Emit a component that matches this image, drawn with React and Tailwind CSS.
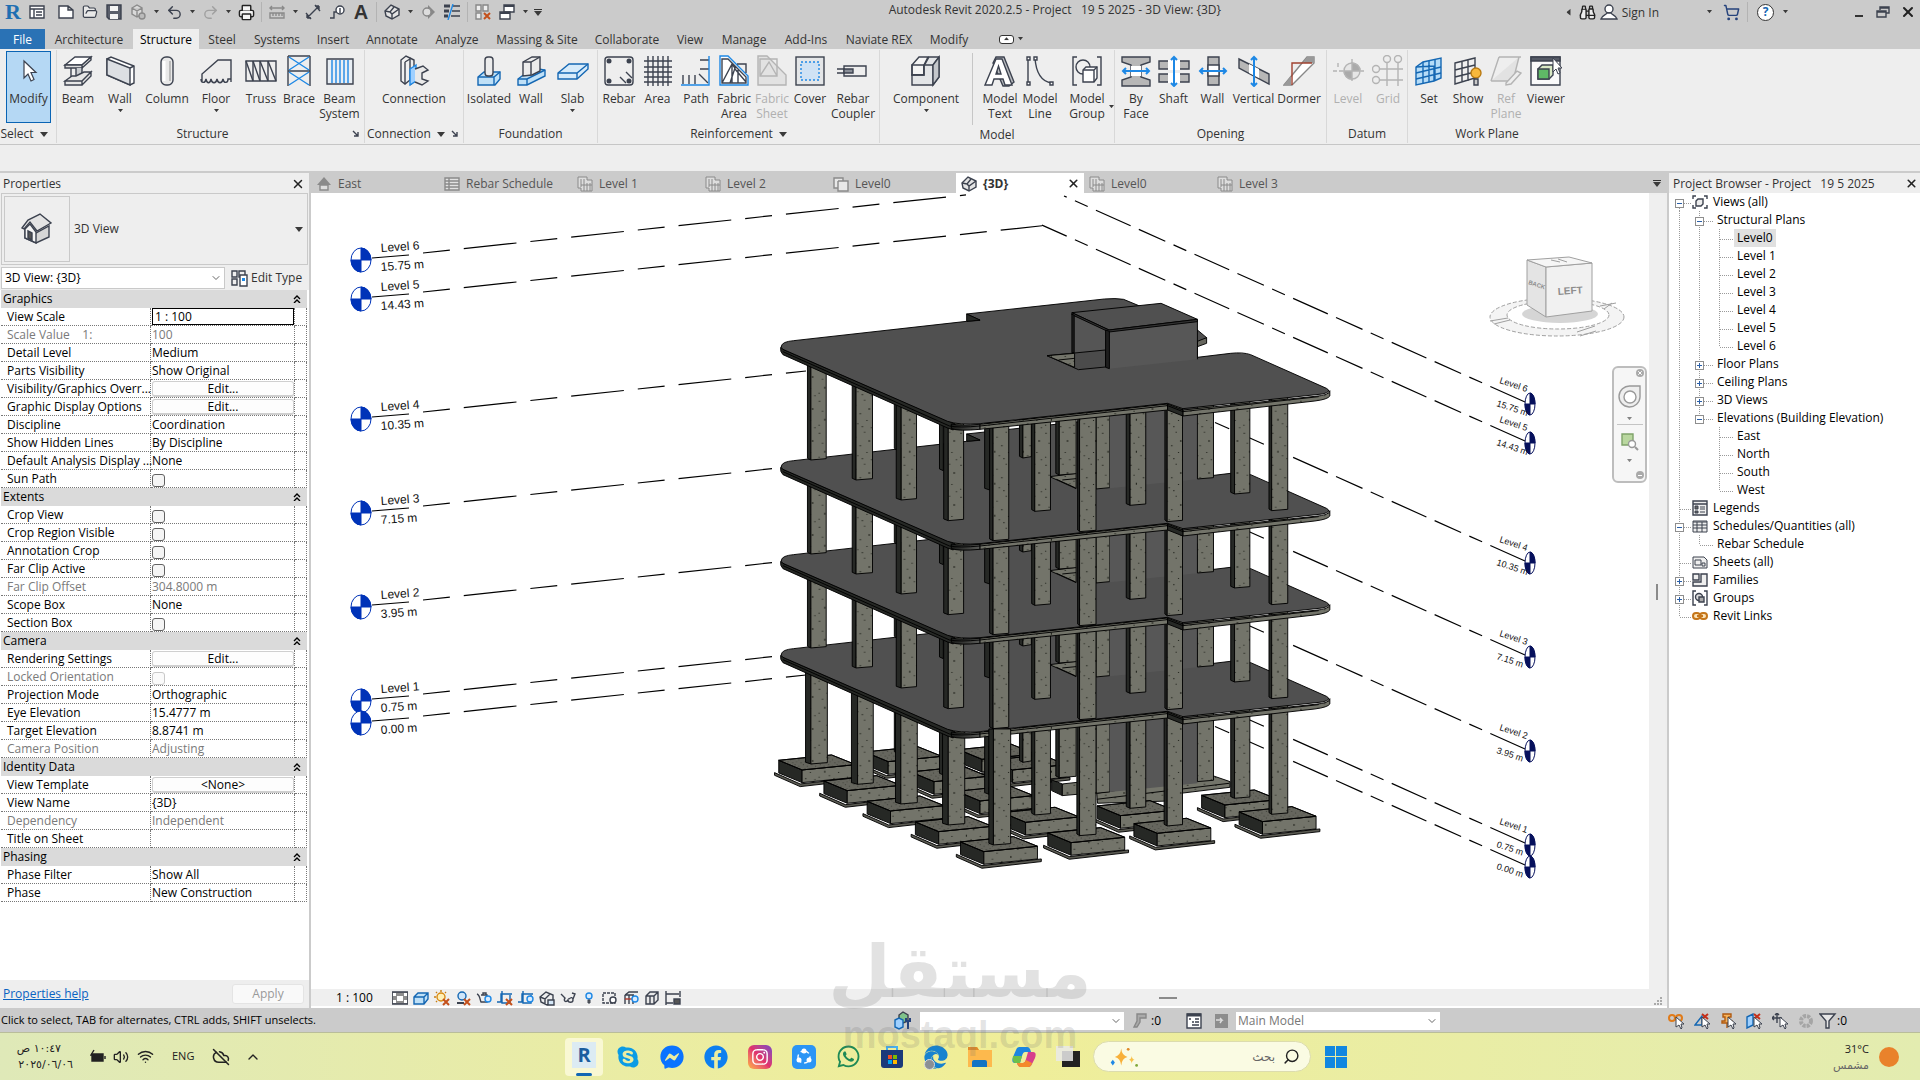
import {
  Binoculars,
  ChevronDown,
  ChevronUp,
  CloudOff,
  FolderOpen,
  Printer,
  Redo2,
  Save,
  Search,
  ShoppingCart,
  Undo2,
  Volume2,
  Wifi,
  X,
} from "lucide-react";
import {
  FaEdge,
  FaFacebook,
  FaFacebookMessenger,
  FaInstagram,
  FaSkype,
  FaWhatsapp,
} from "react-icons/fa";

const INK = "#3c424f";
const BLUE = "#1e88e5";
const MUTED = "#b4b4b4";

// ================= SMALL SHARED PIECES =================

function Caret({ className = "w-[6px]" }) {
  return (
    <svg viewBox="0 0 8 5" className={className}>
      <path d="M0 0h8L4 5z" fill="#3a3a3a" />
    </svg>
  );
}

function Art({ size = 32, className = "", children }) {
  return (
    <svg
      viewBox={`0 0 ${size} ${size}`}
      width={size}
      height={size}
      fill="none"
      stroke={INK}
      strokeWidth="1.4"
      className={`shrink-0 ${className}`}
    >
      {children}
    </svg>
  );
}

function Picker({ label, options, className = "", selectClass = "" }) {
  return (
    <span className={`relative flex shrink-0 items-center bg-white ${className}`}>
      <select aria-label={label} className={`h-full w-full appearance-none bg-transparent ${selectClass}`}>
        {options.map((option) => (
          <option key={option}>{option}</option>
        ))}
      </select>
      <ChevronDown size={12} color="#666" className="pointer-events-none absolute right-[2px]" />
    </span>
  );
}

// ================= RIBBON ICONS =================

const ribbonArt = {
  cursor: (
    <path d="M11 6v17l4-4 3 7 3-1.500-3-7h5z" fill="#fff" strokeWidth="1.200" />
  ),
  beam: (
    <>
      <path d="M3 10l10-8h16l-9 8z" fill="#fff" />
      <path d="M3 10h17v3H3zM20 10l9-8v3l-9 8" fill="#ddd" />
      <path d="M9 13v10M14 13v9l6-4V13" fill="#c9ccd0" />
      <path d="M3 26l7-5h4l8-4h7l-9 9zM3 26h17v4H3zM20 26l9-9v4l-9 9" fill="#e6e6e6" />
    </>
  ),
  wall: (
    <>
      <path d="M3 4l4-2 23 9v17l-4 2L3 20z" fill="#fff" />
      <path d="M3 4l23 9v17L3 20z" fill="#dcdfe3" />
      <path d="M26 13l4-2" />
    </>
  ),
  column: (
    <>
      <rect x="10" y="2" width="12" height="28" rx="5" fill="#e9e9e9" />
      <path d="M13 6v20" stroke="#fff" strokeWidth="3" />
      <path d="M19 6v20" stroke="#bbb" strokeWidth="2" />
    </>
  ),
  floor: (
    <>
      <path d="M2 20L18 5h13v22H2z" fill="#ececec" stroke="none" />
      <path d="M31 27V5H18L2 19v8M1 24c0 4 4 5 5 0 1 5 4 5 5 0 1 5 5 5 6 0 1 5 5 5 6 0 1 5 5 4 5 0l3 0" />
    </>
  ),
  truss: (
    <>
      <path d="M1 6h30v20H1zM1 6v20M8 6v20M15 6v20M23 6v20" />
      <path d="M1 6l7 20M8 6l7 20M15 6l8 20M23 6l8 20" />
    </>
  ),
  brace: (
    <>
      <path d="M5 1h22M5 16h22M5 31V1M27 31V1" />
      <path d="M6 2l20 13M26 2L6 15M6 17l20 13M26 17L6 30" stroke={BLUE} />
    </>
  ),
  beamSystem: (
    <>
      <path d="M3 4h26v25H3z" fill="#e8eef4" />
      <path d="M8 5v23M12 5v23M16 5v23M20 5v23M24 5v23" stroke={BLUE} />
    </>
  ),
  connection: (
    <>
      <path d="M3 5l5-4 4 2v22l-5 4-4-3z" fill="#f0f0f0" />
      <path d="M7 7l5-3M7 7v22M12 3l4 2v22l-4 3" />
      <path d="M12 14l6-4v16l-6 4z" fill="#9fd0ff" stroke={BLUE} />
      <path d="M17 14l8-3 5 4-6 3v6l6 2-6 4-7-3" fill="#e9e9e9" />
    </>
  ),
  isolated: (
    <>
      <path d="M5 22l6-5h16v7l-5 6H5z" fill="#bfe0f7" stroke="#1467b3" />
      <path d="M5 22h16l6-5M21 22v8" stroke="#1467b3" />
      <rect x="12" y="2" width="8" height="19" rx="3" fill="#ececec" />
    </>
  ),
  wallFooting: (
    <>
      <path d="M3 24l8-6 4 2 9-6 6 1v6L12 30H3z" fill="#bfe0f7" stroke="#1467b3" />
      <path d="M3 24h9l18-9M12 24v6" stroke="#1467b3" />
      <path d="M8 7l9-5h8v14l-8 4-9 1z" fill="#ececec" />
      <path d="M8 7l8 0 9-5M16 7v13" />
    </>
  ),
  slab: (
    <>
      <path d="M1 18L12 9h19v5L20 24H1z" fill="#d7ebfa" stroke="#1467b3" />
      <path d="M1 18h19l11-9M20 18v6" stroke="#1467b3" />
    </>
  ),
  rebar: (
    <>
      <rect x="2" y="2" width="28" height="28" rx="3" />
      <g fill={INK} stroke="none">
        <circle cx="6" cy="6" r="2.500" />
        <circle cx="26" cy="6" r="2.500" />
        <circle cx="6" cy="26" r="2.500" />
        <circle cx="26" cy="26" r="2.500" />
      </g>
      <path d="M17 22l6 6M23 17l6 6" />
    </>
  ),
  area: (
    <path d="M2 6h28M2 12h28M2 17h28M2 22h28M2 27h28M6 1v30M11 1v30M16 1v30M21 1v30M26 1v30" />
  ),
  path: (
    <>
      <path d="M20 5h9M20 14h9M3 20v9M9 20v9M15 20v9M19 19l9 9" />
      <path d="M29 1v29H1" stroke={BLUE} />
    </>
  ),
  fabricArea: (
    <>
      <path d="M2 1h8l20 20v9H2z" fill="#fff" stroke={BLUE} />
      <path d="M4 4v24h24v-6L10 4zM4 28L14 9l3 4-5 15M17 14l11 13M14 10V28M20 15v13" />
      <path d="M19 9h9v9" />
    </>
  ),
  fabricSheet: (
    <g stroke={MUTED}>
      <path d="M2 1h9l19 19v10H2z" fill="#e2e2e2" />
      <path d="M4 4h17v17H4zM4 21l9-14 8 14" />
    </g>
  ),
  cover: (
    <>
      <rect x="2" y="2" width="28" height="28" fill="#e4e6e8" />
      <rect x="7" y="7" width="18" height="18" fill="#cfe2f4" stroke={BLUE} strokeDasharray="2 2" />
    </>
  ),
  coupler: (
    <>
      <path d="M0 14h8M0 18h8M7 11h22v10H7z" />
      <path d="M7 14h9v4H7z" fill="#8a8f98" />
    </>
  ),
  component: (
    <>
      <path d="M2 10l7-8h9l-4 8v10H2z" fill="#f4f4f4" />
      <path d="M2 20h12v-9l5-9h10v20l-6 8H2z" fill="#e3e5e7" />
      <path d="M14 10h9v20M23 10l6-8M2 10h12v10H2z" fill="none" />
      <path d="M23 10l6-8v20l-6 8z" fill="#c4c7cb" />
    </>
  ),
  modelText: (
    <>
      <path d="M9 8l3-6h8l10 25-5 4h-6z" fill="#b9bcc0" />
      <path d="M1 30L12 4h6l10 26h-7l-2-6H10l-2 6zM12 19h5l-2.500-8z" fill="#fff" />
    </>
  ),
  modelLine: (
    <>
      <path d="M4 3v25M11 3c1 15 6 23 16 25" />
      <path d="M3 2h3v3H3zM3 27h3v3H3zM10 2h3v3h-3zM26 27h3v3h-3z" fill="#fff" />
    </>
  ),
  modelGroup: (
    <>
      <path d="M6 2H2v28h4M26 2h4v28h-4" />
      <circle cx="12" cy="12" r="7" fill="#f0f0f0" />
      <path d="M12 15l3-3h11v11l-3 4H12z" fill="#fff" />
      <path d="M12 15h11v12M23 15l3-3" />
    </>
  ),
  byFace: (
    <>
      <path d="M2 2h28v5l-9 3v12l9 3v6H2v-6l9-3V10L2 7z" fill="#b7b7b7" />
      <path d="M11 11h10v10H11z" fill="#fff" stroke="none" />
      <path d="M3 16h26M6 13l-3 3 3 3M26 13l3 3-3 3" stroke={BLUE} strokeWidth="2" />
    </>
  ),
  shaft: (
    <>
      <path d="M1 6h30v8H1zM1 19h30v8H1z" fill="#b7b7b7" />
      <path d="M10 5h12v10H10zM10 18h12v10H10z" fill="#fff" stroke="none" />
      <path d="M16 2v29M13 5l3-3 3 3M13 28l3 3 3-3" stroke={BLUE} strokeWidth="2" />
    </>
  ),
  wallOpening: (
    <>
      <path d="M11 2h11v28H11z" fill="#b7b7b7" />
      <path d="M11 10h11v11H11z" fill="#fff" />
      <path d="M3 16h26M6 13l-3 3 3 3M26 13l3 3-3 3" stroke={BLUE} strokeWidth="2" />
    </>
  ),
  vertical: (
    <>
      <path d="M1 4l30 15v10L1 13z" fill="#b7b7b7" />
      <path d="M11 9l10 5v9l-10-5z" fill="#fff" stroke="none" />
      <path d="M16 2v29M13 5l3-3 3 3M13 28l3 3 3-3" stroke={BLUE} strokeWidth="2" />
    </>
  ),
  dormer: (
    <>
      <path d="M1 30L24 2h7v6L9 30z" fill="#fff" stroke="#888" />
      <path d="M1 30l7-9v9zM24 2h7v6h-11z" fill="#999" stroke="none" />
      <path d="M9 30V8h20" stroke="#a0412f" />
    </>
  ),
  level: (
    <g stroke={MUTED}>
      <path d="M1 16h10M6 8v5M29 16h3M20 4v24" strokeDasharray="4 2" />
      <circle cx="20" cy="16" r="8" fill="#e6e6e6" />
      <path d="M20 8a8 8 0 0 1 8 8h-8zM20 24a8 8 0 0 1-8-8h8z" fill="#aaa" />
    </g>
  ),
  grid: (
    <g stroke={MUTED}>
      <path d="M7 14h24M7 25h24M15 8v23M26 8v23" />
      <circle cx="15" cy="4" r="3.500" />
      <circle cx="26" cy="4" r="3.500" />
      <circle cx="4" cy="14" r="3.500" />
      <circle cx="4" cy="25" r="3.500" />
    </g>
  ),
  set: (
    <>
      <path d="M3 12l7-5 18-4v20l-7 3-18 4z" fill="#b5dcf8" stroke="#1467b3" />
      <path d="M10 7v22M16 6v21M22 4v22M3 18l25-6M3 24l25-6M3 12l18-1v15" stroke="#1467b3" />
    </>
  ),
  show: (
    <>
      <path d="M3 8l20-5v20L3 29zM3 15l20-5M3 22l20-5M10 6v21M16 5v21" fill="#f0f0f0" />
      <circle cx="24" cy="18" r="5" fill="#f8b83c" stroke="#b97a12" />
      <path d="M22 24h4v6h-4z" fill="#c9c9c9" />
    </>
  ),
  refPlane: (
    <g stroke={MUTED}>
      <path d="M1 26h22l6-24M9 2h22M1 26L9 2" fill="#e2e2e2" />
      <path d="M16 28l11-12 4 2-10 11-5 1z" fill="#eee" />
    </g>
  ),
  viewer: (
    <>
      <path d="M1 2h29v28H1z" fill="#fafafa" />
      <path d="M1 2h29v4H1z" fill="#555a66" />
      <path d="M8 14l4-4h11v10l-4 4H8z" fill="#d8e8c4" />
      <path d="M8 14h11v10H8z" fill="#5fb866" />
      <path d="M23 3v14l3-3 2 5 2-1-2-5h4z" fill="#fff" strokeWidth="1" />
    </>
  ),
};

const ribbonPanels = [
  {
    title: "Structure",
    launcher: true,
    tools: [
      { id: "beam", art: "beam", lines: ["Beam"], w: "w-[42px]" },
      { id: "wall", art: "wall", lines: ["Wall"], w: "w-[42px]", drop: true },
      { id: "column", art: "column", lines: ["Column"], w: "w-[52px]" },
      { id: "floor", art: "floor", lines: ["Floor"], w: "w-[46px]", drop: true },
      { id: "truss", art: "truss", lines: ["Truss"], w: "w-[44px]" },
      { id: "brace", art: "brace", lines: ["Brace"], w: "w-[32px]" },
      { id: "bsys", art: "beamSystem", lines: ["Beam", "System"], w: "w-[49px]" },
    ],
  },
  {
    title: "Connection",
    menu: true,
    launcher: true,
    tools: [{ id: "conn", art: "connection", lines: ["Connection"], w: "w-[98px]" }],
  },
  {
    title: "Foundation",
    tools: [
      { id: "iso", art: "isolated", lines: ["Isolated"], w: "w-[50px]" },
      { id: "fwall", art: "wallFooting", lines: ["Wall"], w: "w-[34px]" },
      { id: "slab", art: "slab", lines: ["Slab"], w: "w-[49px]", drop: true },
    ],
  },
  {
    title: "Reinforcement",
    menu: true,
    tools: [
      { id: "rebar", art: "rebar", lines: ["Rebar"], w: "w-[42px]" },
      { id: "area", art: "area", lines: ["Area"], w: "w-[35px]" },
      { id: "path", art: "path", lines: ["Path"], w: "w-[42px]" },
      { id: "farea", art: "fabricArea", lines: ["Fabric", "Area"], w: "w-[34px]" },
      { id: "fsheet", art: "fabricSheet", lines: ["Fabric", "Sheet"], w: "w-[42px]", off: true },
      { id: "cover", art: "cover", lines: ["Cover"], w: "w-[34px]" },
      { id: "coupler", art: "coupler", lines: ["Rebar", "Coupler"], w: "w-[52px]" },
    ],
  },
  {
    title: "Model",
    tools: [
      { id: "comp", art: "component", lines: ["Component"], w: "w-[92px]", drop: true, split: true },
      { id: "mtext", art: "modelText", lines: ["Model", "Text"], w: "w-[40px]" },
      { id: "mline", art: "modelLine", lines: ["Model", "Line"], w: "w-[40px]" },
      { id: "mgroup", art: "modelGroup", lines: ["Model", "Group"], w: "w-[54px]", side: true },
    ],
  },
  {
    title: "Opening",
    tools: [
      { id: "face", art: "byFace", lines: ["By", "Face"], w: "w-[42px]" },
      { id: "shaft", art: "shaft", lines: ["Shaft"], w: "w-[33px]" },
      { id: "owall", art: "wallOpening", lines: ["Wall"], w: "w-[45px]" },
      { id: "vert", art: "vertical", lines: ["Vertical"], w: "w-[37px]" },
      { id: "dormer", art: "dormer", lines: ["Dormer"], w: "w-[54px]" },
    ],
  },
  {
    title: "Datum",
    tools: [
      { id: "lvl", art: "level", lines: ["Level"], w: "w-[42px]", off: true },
      { id: "grd", art: "grid", lines: ["Grid"], w: "w-[38px]", off: true },
    ],
  },
  {
    title: "Work Plane",
    open: true,
    tools: [
      { id: "set", art: "set", lines: ["Set"], w: "w-[42px]" },
      { id: "show", art: "show", lines: ["Show"], w: "w-[36px]" },
      { id: "ref", art: "refPlane", lines: ["Ref", "Plane"], w: "w-[40px]", off: true },
      { id: "viewer", art: "viewer", lines: ["Viewer"], w: "w-[40px]" },
    ],
  },
];

// ================= TITLE BAR =================

function QuickButton({ label, children }) {
  return (
    <button aria-label={label} className="flex h-6 w-6 items-center justify-center">
      {children}
    </button>
  );
}

function QuickCaret() {
  return (
    <button aria-label="More" className="flex h-6 w-3 items-center justify-center">
      <Caret className="w-[5px]" />
    </button>
  );
}

function QuickDivider() {
  return <div className="mx-[3px] h-5 w-px bg-[#b3b3b3]" />;
}

function HouseMark() {
  return (
    <Art size={16}>
      <path d="M1 7l6-6 8 4v6l-7 4-6-3z" fill="#e4e4e4" />
      <path d="M1 7l5 1 4-5M6 8l2 2 7-5M8 9v6" />
    </Art>
  );
}

function TitleBar() {
  return (
    <header className="flex h-[29px] shrink-0 items-start bg-[#cbcbcb]">
      <div className="flex items-center pl-px">
        <span className="w-6 text-center font-['Liberation_Serif',serif] text-[22px] leading-6 font-bold text-[#1f6fb2]">
          R
        </span>
        <QuickButton label="Properties">
          <Art size={16}>
            <path d="M1 2h14v12H1zM1 5h14M5 5v9M7 8h6M7 11h6" fill="#fff" />
          </Art>
        </QuickButton>
        <div className="w-[5px]" />
        <QuickButton label="New">
          <Art size={16}>
            <path d="M1 2h9l5 4v8H1zM10 2v4h5" fill="#fff" />
          </Art>
        </QuickButton>
        <QuickButton label="Open">
          <FolderOpen size={16} color={INK} fill="#e8e8e8" strokeWidth={1.8} />
        </QuickButton>
        <QuickButton label="Save">
          <Art size={16}>
            <path d="M1 1h14v14H3l-2-2z" fill="#5a5f6b" />
            <path d="M4 2h8v5H4zM4 10h8v5H4z" fill="#f4f4f4" stroke="none" />
          </Art>
        </QuickButton>
        <QuickButton label="Synchronize">
          <Art size={16}>
            <g stroke="#8a8a8a">
              <path d="M2 4l5-3 5 3v6l-5 3-5-3zM2 4l5 3 5-3M7 7v6" fill="#d9d9d9" />
              <circle cx="12" cy="12" r="3" fill="#bbb" />
            </g>
          </Art>
        </QuickButton>
        <QuickCaret />
        <QuickButton label="Undo">
          <Undo2 size={17} color={INK} />
        </QuickButton>
        <QuickCaret />
        <QuickButton label="Redo">
          <Redo2 size={17} color="#a0a0a0" />
        </QuickButton>
        <QuickCaret />
        <QuickButton label="Print">
          <Printer size={17} color="#222" fill="#f4f4f4" />
        </QuickButton>
        <QuickDivider />
        <QuickButton label="Measure">
          <Art size={16}>
            <path d="M1 4h14M3 2L1 4l2 2M13 2l2 2-2 2M1 9h14v5H1zM4 9v3M7 9v3M10 9v3M13 9v3" stroke="#8a8a8a" />
          </Art>
        </QuickButton>
        <QuickCaret />
        <QuickButton label="Aligned Dimension">
          <Art size={16}>
            <path d="M2 14L14 2M1 9l5 6M10 1l5 6M2 14h4M2 14v-4M14 2h-4M14 2v4" />
          </Art>
        </QuickButton>
        <QuickButton label="Tag by Category">
          <Art size={16}>
            <path d="M1 14h4V8h3" />
            <circle cx="11" cy="6" r="4" fill="#fff" />
            <path d="M11 4v5" />
          </Art>
        </QuickButton>
        <QuickButton label="Text">
          <span className="font-['Liberation_Sans',sans-serif] text-xl leading-6 font-bold text-[#333]">
            A
          </span>
        </QuickButton>
        <QuickDivider />
        <QuickButton label="Default 3D View">
          <HouseMark />
        </QuickButton>
        <QuickCaret />
        <QuickButton label="Section">
          <Art size={16}>
            <path d="M8 1l7 7-7 7z" fill="#888" stroke="none" />
            <circle cx="7" cy="8" r="4" fill="#ddd" stroke="#888" />
          </Art>
        </QuickButton>
        <QuickButton label="Thin Lines">
          <Art size={16}>
            <path d="M0 2h6M0 7h5M0 12h4" strokeWidth="3" />
            <path d="M9 2h7M8 7h8M7 12h9" />
            <path d="M9 0L4 16" stroke={BLUE} />
          </Art>
        </QuickButton>
        <QuickDivider />
        <QuickButton label="Close Inactive Views">
          <Art size={16}>
            <path d="M1 1h5v6H1zM8 1h5v6H8zM1 9h5v6H1z" fill="#eee" stroke="#888" />
            <path d="M9 9l6 6M15 9l-6 6" stroke="#c4501b" strokeWidth="2" />
          </Art>
        </QuickButton>
        <QuickButton label="Switch Windows">
          <Art size={16}>
            <path d="M5 1h10v7H5z" fill="#fff" />
            <path d="M5 2h10" strokeWidth="2" />
            <path d="M1 8h10v7H1z" fill="#fff" />
            <path d="M1 9h10" strokeWidth="2" />
          </Art>
        </QuickButton>
        <QuickCaret />
        <button aria-label="Customize toolbar" className="flex w-[14px] flex-col items-center gap-px">
          <span className="h-px w-2 bg-[#333]" />
          <Caret className="w-2" />
        </button>
      </div>

      <h1 className="flex-1 text-center text-[12px] leading-5 whitespace-pre text-[#333]">
        {"Autodesk Revit 2020.2.5 - Project   19 5 2025 - 3D View: {3D}"}
      </h1>

      <div className="flex h-6 items-center text-[12px] text-[#333]">
        <button aria-label="Collapse search" className="mr-1">
          <Caret className="w-[7px] rotate-90" />
        </button>
        <QuickButton label="Search">
          <Binoculars size={17} color="#222" fill="#eee" />
        </QuickButton>
        <button className="flex items-center gap-1">
          <Art size={18}>
            <circle cx="9" cy="6" r="4" fill="#fff" />
            <path d="M1 16c1-4 5-4 6-6h4c1 2 5 2 6 6z" fill="#fff" />
          </Art>
          <span className="pt-px">Sign In</span>
        </button>
        <div className="w-11" />
        <QuickCaret />
        <div className="w-1" />
        <QuickButton label="App Store">
          <ShoppingCart size={17} color="#26437c" />
        </QuickButton>
        <div className="mx-1 h-5 w-px bg-[#b3b3b3]" />
        <button
          aria-label="Help"
          className="mx-[5px] flex h-[17px] w-[17px] items-center justify-center rounded-full border border-[#333] bg-white text-[12px] font-bold text-[#1467b3]"
        >
          ?
        </button>
        <QuickCaret />
        <div className="w-14" />
        <QuickButton label="Minimize">
          <span className="mt-2 h-[2px] w-2 bg-[#333]" />
        </QuickButton>
        <QuickButton label="Restore">
          <Art size={14}>
            <path d="M4 5V2h9v6h-3M1 6h9v6H1zM1 7h9M4 3h9" />
          </Art>
        </QuickButton>
        <div className="w-px" />
        <QuickButton label="Close">
          <X size={16} color="#222" strokeWidth={3} />
        </QuickButton>
      </div>
    </header>
  );
}

// ================= RIBBON =================

const ribbonTabs = [
  { name: "Architecture", w: "w-[88px]" },
  { name: "Structure", w: "w-[66px]", active: true },
  { name: "Steel", w: "w-[46px]" },
  { name: "Systems", w: "w-[64px]" },
  { name: "Insert", w: "w-[48px]" },
  { name: "Annotate", w: "w-[70px]" },
  { name: "Analyze", w: "w-[60px]" },
  { name: "Massing & Site", w: "w-[100px]" },
  { name: "Collaborate", w: "w-[80px]" },
  { name: "View", w: "w-[46px]" },
  { name: "Manage", w: "w-[62px]" },
  { name: "Add-Ins", w: "w-[62px]" },
  { name: "Naviate REX", w: "w-[84px]" },
  { name: "Modify", w: "w-[56px]" },
];

function RibbonTabs() {
  return (
    <nav className="flex h-5 shrink-0 bg-[#cbcbcb] text-[12px] text-[#333]">
      <button className="w-[45px] bg-[#2a72b5] pt-px text-white">File</button>
      {ribbonTabs.map((tab) => (
        <button
          key={tab.name}
          className={`shrink-0 pt-px whitespace-nowrap ${tab.w} ${tab.active ? "bg-[#eeeeee] text-black" : ""}`}
        >
          {tab.name}
        </button>
      ))}
      <button aria-label="Ribbon display" className="ml-[22px] flex items-center gap-1">
        <span className="flex h-[9px] w-[15px] items-center justify-center rounded-[3px] border border-[#333] bg-white">
          <Caret className="w-[5px] rotate-180" />
        </span>
        <Caret className="w-[5px]" />
      </button>
    </nav>
  );
}

function RibbonTool({ tool }) {
  return (
    <>
      <button
        disabled={tool.off}
        className={`relative flex shrink-0 flex-col items-center pt-[5px] ${tool.w} ${
          tool.off ? "text-[#b0b0b0]" : "text-[#333]"
        }`}
      >
        <Art size={32}>{ribbonArt[tool.art]}</Art>
        <span className="mt-1 flex flex-col text-center leading-[15px] whitespace-nowrap">
          {tool.lines.map((line) => (
            <span key={line}>{line}</span>
          ))}
        </span>
        {tool.drop && <Caret className="mt-[3px] w-[5px]" />}
        {tool.side && <Caret className="absolute right-0 bottom-4 w-[5px]" />}
      </button>
      {tool.split && <div className="mt-[3px] mr-[7px] h-[72px] w-px bg-[#c6c6c6]" />}
    </>
  );
}

function Ribbon() {
  return (
    <section className="flex h-24 shrink-0 border-b border-[#c6c6c6] bg-[#eeeeee] text-[12px] text-[#333]">
      <div className="my-px flex w-[57px] flex-col items-center border-r border-[#d8d8d8]">
        <button className="mt-px flex h-[73px] w-[45px] flex-col items-center self-start ml-[6px] border border-[#0a64b4] bg-[#b5d8f4] pt-[3px]">
          <Art size={32}>{ribbonArt.cursor}</Art>
          <span className="mt-1 leading-[15px]">Modify</span>
        </button>
        <button className="flex h-5 items-center gap-[6px] pt-[2px] pr-2">
          Select <Caret className="w-2" />
        </button>
      </div>

      {ribbonPanels.map((panel) => (
        <div
          key={panel.title}
          className={`my-px flex flex-col ${panel.open ? "" : "border-r border-[#d8d8d8]"}`}
        >
          <div className="flex h-[74px]">
            {panel.tools.map((tool) => (
              <RibbonTool key={tool.id} tool={tool} />
            ))}
          </div>
          <div
            className={`relative flex h-5 items-center justify-center gap-[6px] pt-[2px] ${
              panel.menu && panel.launcher ? "pr-4" : ""
            } ${panel.title === "Structure" ? "pr-4" : ""}`}
          >
            {panel.title}
            {panel.menu && <Caret className="w-2" />}
            {panel.launcher && (
              <Art size={8} className="absolute right-1">
                <path d="M1 1l5 5M2 6h4V2" />
              </Art>
            )}
          </div>
        </div>
      ))}
    </section>
  );
}

// ================= PROPERTIES PALETTE =================

const propertyGroups = [
  {
    title: "Graphics",
    rows: [
      { name: "View Scale", value: "1 : 100", kind: "field" },
      { name: "Scale Value    1:", value: "100", off: true },
      { name: "Detail Level", value: "Medium" },
      { name: "Parts Visibility", value: "Show Original" },
      { name: "Visibility/Graphics Overr...", value: "Edit...", kind: "button" },
      { name: "Graphic Display Options", value: "Edit...", kind: "button" },
      { name: "Discipline", value: "Coordination" },
      { name: "Show Hidden Lines", value: "By Discipline" },
      { name: "Default Analysis Display ...", value: "None" },
      { name: "Sun Path", kind: "check" },
    ],
  },
  {
    title: "Extents",
    rows: [
      { name: "Crop View", kind: "check" },
      { name: "Crop Region Visible", kind: "check" },
      { name: "Annotation Crop", kind: "check" },
      { name: "Far Clip Active", kind: "check" },
      { name: "Far Clip Offset", value: "304.8000 m", off: true },
      { name: "Scope Box", value: "None" },
      { name: "Section Box", kind: "check" },
    ],
  },
  {
    title: "Camera",
    rows: [
      { name: "Rendering Settings", value: "Edit...", kind: "button" },
      { name: "Locked Orientation", kind: "check", off: true },
      { name: "Projection Mode", value: "Orthographic" },
      { name: "Eye Elevation", value: "15.4777 m" },
      { name: "Target Elevation", value: "8.8741 m" },
      { name: "Camera Position", value: "Adjusting", off: true },
    ],
  },
  {
    title: "Identity Data",
    rows: [
      { name: "View Template", value: "<None>", kind: "button" },
      { name: "View Name", value: "{3D}" },
      { name: "Dependency", value: "Independent", off: true },
      { name: "Title on Sheet", value: "" },
    ],
  },
  {
    title: "Phasing",
    rows: [
      { name: "Phase Filter", value: "Show All" },
      { name: "Phase", value: "New Construction" },
    ],
  },
];

function PropertyValue({ row, id }) {
  switch (row.kind) {
    case "field":
      return (
        <input
          id={id}
          defaultValue={row.value}
          className="block h-[17px] w-full border border-black bg-white px-[2px]"
        />
      );

    case "button":
      return (
        <button
          id={id}
          className="block h-4 w-full rounded-[3px] border border-b-2 border-[#cfcfcf] bg-[#fdfdfd] text-center leading-[13px]"
        >
          {row.value}
        </button>
      );

    case "check":
      return (
        <input
          id={id}
          type="checkbox"
          disabled={row.off}
          className={`mt-[3px] block h-[13px] w-[13px] appearance-none rounded-[3px] border ${
            row.off ? "border-[#c8c8c8] bg-[#fafafa]" : "border-[#626262] bg-[#f5f5f5]"
          }`}
        />
      );

    default:
      return <span>{row.value}</span>;
  }
}

function PropertyTable() {
  return (
    <table className="ml-px w-[306px] table-fixed border-separate border-spacing-0 text-[12px] leading-4 text-black">
      <colgroup>
        <col className="w-[150px]" />
        <col className="w-[144px]" />
        <col className="w-[12px]" />
      </colgroup>
      {propertyGroups.map((group) => (
        <tbody key={group.title}>
          <tr>
            <th colSpan={3} className="h-[18px] bg-[#dadada] p-0 font-normal">
              <div className="flex items-center justify-between pr-[6px] pl-[2px]">
                {group.title}
                <Art size={8}>
                  <path d="M1 4l3-3 3 3M1 8l3-3 3 3" stroke="#000" />
                </Art>
              </div>
            </th>
          </tr>
          {group.rows.map((row) => {
            const id = `prop-${row.name.replace(/\W+/g, "-")}`;
            return (
              <tr key={row.name} className={row.off ? "text-[#7a7a7a]" : ""}>
                <td className="h-[18px] border-r border-b border-dotted border-[#777] p-0 pl-[6px] whitespace-pre">
                  <label htmlFor={id}>{row.name}</label>
                </td>
                <td className="h-[18px] border-r border-b border-dotted border-[#777] p-0 pl-px whitespace-nowrap">
                  <PropertyValue row={row} id={id} />
                </td>
                <td className="h-[18px] border-r border-b border-dotted border-[#777] p-0" />
              </tr>
            );
          })}
        </tbody>
      ))}
    </table>
  );
}

function PropertiesPalette() {
  return (
    <aside className="flex w-[311px] shrink-0 flex-col border-r-2 border-[#cbcbcb] bg-[#eeeeee] text-[12px] text-[#333]">
      <div className="flex h-5 items-center justify-between pt-px pr-1 pl-[3px]">
        Properties
        <button aria-label="Close Properties">
          <X size={14} color="#222" strokeWidth={2.5} />
        </button>
      </div>

      {/* ================= TYPE SELECTOR ================= */}
      <div className="mx-px flex h-[72px] items-center border border-[#c9c9c9] p-[2px] pr-1">
        <div className="flex h-[66px] w-[66px] items-center justify-center border border-[#c9c9c9]">
          <Art size={32}>
            <path d="M4 16v9l11 5 13-6V13l-13 7z" fill="#d6d6d6" />
            <path d="M4 16l5-5 6 8v11L4 25z" fill="#f4f4f4" />
            <path d="M1 15L7 7l12-6 11 9-14 8-7-9-6 7z" fill="#e4e4e4" />
            <path d="M7 18l4 2v7l-4-2z" fill="#555" />
          </Art>
        </div>
        <span className="ml-1 flex-1">3D View</span>
        <button aria-label="Change type">
          <Caret className="w-2" />
        </button>
      </div>

      <div className="flex h-[25px] items-center">
        <Picker
          label="View"
          options={["3D View: {3D}"]}
          className="ml-px h-[22px] w-[224px] border border-[#c9c9c9]"
          selectClass="px-[3px] text-black"
        />
        <button className="ml-[5px] flex items-center gap-[3px]">
          <Art size={18}>
            <path d="M2 2h5v6H2zM9 2h6v6H9zM2 10h5v6H2z" fill="#eee" />
            <path d="M10 6h7v11h-7z" fill="#fff" />
            <path d="M12 9h3v3h-3z" fill={BLUE} stroke="none" />
          </Art>
          Edit Type
        </button>
      </div>

      <div className="flex-1 bg-white">
        <PropertyTable />
      </div>

      <div className="flex h-7 items-center justify-between pr-[5px] pl-[3px]">
        <a href="#help" className="text-[#0a63c2] underline">
          Properties help
        </a>
        <button disabled className="h-5 w-[72px] rounded-[3px] border border-[#e4e4e4] bg-[#f9f9f9] text-[#9a9a9a]">
          Apply
        </button>
      </div>
    </aside>
  );
}

// ================= VIEW TABS =================

const viewTabs = [
  { id: "east", name: "East", kind: "elevation", w: "w-[128px]" },
  { id: "rebar", name: "Rebar Schedule", kind: "schedule", w: "w-[133px]" },
  { id: "l1", name: "Level 1", kind: "plan", w: "w-[128px]" },
  { id: "l2", name: "Level 2", kind: "plan", w: "w-[128px]" },
  { id: "l0", name: "Level0", kind: "sheet", w: "w-[128px]" },
  { id: "3d", name: "{3D}", kind: "house", w: "w-[128px]", active: true },
  { id: "l0b", name: "Level0", kind: "plan", w: "w-[128px]" },
  { id: "l3", name: "Level 3", kind: "plan", w: "w-[128px]" },
];

const viewTabArt = {
  elevation: (
    <>
      <path d="M8 1l7 8H1z" fill="#8a8a8a" stroke="none" />
      <path d="M4 9h8v5H4z" fill="#ddd" stroke="#8a8a8a" />
    </>
  ),
  schedule: <path d="M1 2h14v12H1zM1 5h14M1 8h14M1 11h14M5 2v12" stroke="#8a8a8a" fill="#e2e2e2" />,
  plan: (
    <path
      d="M1 1h9v3h5v11H4v-3H1zM4 3v8M7 3v12M10 7v8M13 7v8M4 9h11"
      stroke="#8a8a8a"
      strokeWidth="1"
      fill="#ddd"
    />
  ),
  sheet: <path d="M1 2h9v3h5v10H5v-3H1zM5 5v7M10 5H5" stroke="#8a8a8a" fill="#e8e8e8" />,
};

function ViewTabs() {
  return (
    <div className="flex h-5 shrink-0 bg-[#cbcbcb] text-[12px] text-[#555]">
      {viewTabs.map((tab) => (
        <div
          key={tab.id}
          className={`flex shrink-0 items-center pt-px pr-1 pl-[5px] ${tab.w} ${
            tab.active ? "bg-white font-bold text-[#333]" : ""
          }`}
        >
          <button className="flex flex-1 items-center gap-[6px] whitespace-nowrap">
            {tab.active ? <HouseMark /> : <Art size={16}>{viewTabArt[tab.kind]}</Art>}
            {tab.name}
          </button>
          {tab.active && (
            <button aria-label="Close view">
              <X size={13} color="#222" strokeWidth={3} />
            </button>
          )}
        </div>
      ))}
      <button aria-label="View list" className="mr-[6px] ml-auto flex flex-col items-center justify-center gap-px">
        <span className="h-px w-2 bg-[#333]" />
        <Caret className="w-2" />
      </button>
    </div>
  );
}

// ================= 3D MODEL =================

// column: [left, face, right, foot], measured on the top storey
const rearColumns = [
  [678, 687, 709, 564],
  [773, 782, 826, 615],
  [878, 878, 914, 657],
];

const rearStrips = [
  [351, 357, 357, 540],
  [469, 479, 479, 602],
  [587, 600, 600, 660],
];

const frontColumns = [
  [124, 133, 173, 570],
  [1143, 1143, 1185, 627],
  [241, 251, 294, 630],
  [1230, 1240, 1280, 672],
  [356, 369, 409, 690],
  [957, 967, 1008, 706],
  [1330, 1337, 1379, 722],
  [710, 718, 759, 724],
  [480, 492, 532, 752],
  [1058, 1064, 1104, 755],
  [830, 835, 878, 785],
  [600, 609, 650, 812],
];

// ground storey: column plus the near top corner of its footing
const groundPosts = [
  { col: [119, 133, 176, 1482], foot: [110, 1500] },
  { col: [239, 255, 296, 1543], foot: [228, 1562] },
  { col: [1230, 1240, 1280, 1585], foot: [1215, 1605] },
  { col: [354, 368, 411, 1602], foot: [341, 1623] },
  { col: [957, 967, 1008, 1615], foot: [942, 1637] },
  { col: [710, 718, 759, 1635], foot: [694, 1657] },
  { col: [477, 492, 535, 1665], foot: [467, 1685] },
  { col: [1330, 1337, 1379, 1633], foot: [1313, 1655] },
  { col: [1056, 1064, 1104, 1668], foot: [1038, 1690] },
  { col: [828, 835, 878, 1697], foot: [813, 1718] },
];

function Column({ spec, height }) {
  const [left, face, right, foot] = spec;
  const top = foot - height;
  return (
    <g>
      {face > left && (
        <path d={`M${left} ${top}H${face}V${foot}L${left} ${foot - 5}z`} fill="#262825" />
      )}
      {right > face && (
        <path d={`M${face} ${top}H${right}V${foot - 4}L${face} ${foot}z`} fill="url(#concrete)" />
      )}
    </g>
  );
}

function Footing({ x, y }) {
  return (
    <g>
      <path
        d={`M${x - 72} ${y + 8}L${x - 5} ${y + 42}L${x + 150} ${y + 22}v8L${x - 5} ${y + 50}l-67 -34z`}
        fill="#5b5b53"
      />
      <path d={`M${x - 61} ${y - 29}L${x} ${y}v38l-61 -29z`} fill="#262825" />
      <path d={`M${x} ${y}l140 -16v38l-140 16z`} fill="url(#concrete)" />
      <path d={`M${x - 61} ${y - 29}l138 -16l63 29L${x} ${y}z`} fill="#66665e" />
      <path d={`M${x - 61} ${y - 29}l138 -16l63 29L${x} ${y}z`} fill="url(#grain)" />
    </g>
  );
}

function Slab({ y }) {
  return (
    <g transform={`translate(0 ${y})`}>
      <path d="M54 232Q52 245 60 254L490 474L505 480L510 462L60 238z" fill="#262825" />
      <path d="M500 462Q520 468 575 463V478Q520 484 500 476z" fill="url(#nose)" />
      <path
        d="M575 463L1065 402V420L575 478zM1105 420L1450 379Q1488 376 1489 362V378Q1484 388 1450 393L1105 438z"
        fill="url(#concrete)"
      />
      <path d="M1065 402l40 18v18l-40 -18z" fill="#262825" />
      <path d="M1143 206L1167 203V220L1143 230z" fill="#66665e" />
      <path
        d="M56 228Q58 215 88 212L540 154L575 151L540 132L900 87Q930 84 950 88L1143 180L1167 203L1143 214V262L1230 250Q1262 246 1282 254L1480 355Q1496 365 1470 372L1105 416L1065 400L575 461Q520 466 490 454L60 238Q55 234 56 228z"
        fill="#505050"
      />
      <path d="M540 132l35 18l-35 4z" fill="#262825" />
      <path d="M60 245L495 468Q520 474 575 468L1065 407L1105 425L1460 380" fill="none" />
    </g>
  );
}

function StairOpening({ y }) {
  return (
    <g transform={`translate(0 ${y})`}>
      <path d="M757 260L826 250V296z" fill="url(#concrete)" />
      <path d="M790 270l36 -4M775 268l50 26" fill="none" />
    </g>
  );
}

function Storey({ y, height }) {
  const shift = y - 360;
  return (
    <g>
      <Slab y={y} />
      <StairOpening y={y} />
      <g transform={`translate(0 ${shift})`}>
        {rearStrips.map((spec) => (
          <Column key={spec[0]} spec={spec} height={height} />
        ))}
        {rearColumns.map((spec) => (
          <Column key={spec[0]} spec={spec} height={height} />
        ))}
        <path d={`M914 ${655 - height}L1143 ${628 - height}V628L914 655z`} fill="#575757" stroke="none" />
        {frontColumns.map((spec) => (
          <Column key={spec[0]} spec={spec} height={height} />
        ))}
      </g>
    </g>
  );
}

function Building() {
  return (
    <g
      transform="translate(760 270) scale(.3827 .3333)"
      stroke="#000"
      strokeWidth="2.600"
      strokeLinejoin="round"
    >
      {/* ================= FOUNDATIONS ================= */}
      <Footing x={580} y={1468} />
      <Footing x={335} y={1475} />
      <Footing x={660} y={1500} />
      <Footing x={455} y={1535} />
      <Footing x={575} y={1593} />
      <path d="M762 1530l28 12v35l-28 -15z" fill="#262825" />
      <path d="M790 1542l40 -5v36l-40 4z" fill="url(#concrete)" />
      <path d="M880 1570L1185 1518L1228 1535V1552L1100 1570V1592L882 1600z" fill="url(#concrete)" />
      <path d="M880 1588L1226 1540" fill="none" />
      <Column spec={[351, 357, 357, 1450]} height={200} />
      <Column spec={[469, 479, 479, 1515]} height={200} />
      <Column spec={[678, 687, 709, 1477]} height={200} />
      <Column spec={[773, 782, 826, 1523]} height={250} />
      <Column spec={[878, 878, 914, 1570]} height={280} />
      <Column spec={[587, 598, 598, 1573]} height={250} />
      <path d="M914 1300H1143V1540L914 1566z" fill="#575757" stroke="none" />
      <Column spec={[1143, 1143, 1185, 1535]} height={260} />
      {groundPosts.map((post) => (
        <g key={post.col[0]}>
          <Footing x={post.foot[0]} y={post.foot[1]} />
          <Column spec={post.col} height={345} />
        </g>
      ))}
      <Footing x={585} y={1745} />

      {/* ================= STOREYS ================= */}
      <Storey y={924} height={282} />
      <Column spec={[598, 610, 655, 1725]} height={348} />
      <Storey y={642} height={282} />
      <Storey y={360} height={360} />
      <Slab y={0} />

      {/* ================= STAIR HEAD ================= */}
      <path d="M815 130L903 180V292L821 248z" fill="#555" stroke="none" />
      <path d="M750 257L903 240V291L832 299z" fill="#4b4b4b" />
      <path d="M750 257L822 250V292z" fill="url(#concrete)" />
      <path d="M780 270l42 -5" />
      <path d="M912 182L1143 150V268L912 296z" fill="#575757" stroke="none" />
      <path d="M1143 150V268" />
      <path d="M815 128L1048 100L1143 148L912 180z" fill="#505050" />
      <path d="M815 128L912 180L1143 148V155L912 186L815 134z" fill="#333" />
      <path d="M815 132l6 4V248h-6zM903 180l10 4V296l-10 -4z" fill="#1e1e1e" />
    </g>
  );
}

const levels = [
  { name: "Level 6", height: "15.75 m", left: 260, right: 404 },
  { name: "Level 5", height: "14.43 m", left: 299, right: 443 },
  { name: "Level 4", height: "10.35 m", left: 419, right: 563 },
  { name: "Level 3", height: "7.15 m", left: 513, right: 657 },
  { name: "Level 2", height: "3.95 m", left: 607, right: 751 },
  { name: "Level 1", height: "0.75 m", left: 701, right: 845 },
  { name: "", height: "0.00 m", left: 723, right: 867 },
];

function LevelHead({ cx, cy, rx, ry, color }) {
  return (
    <g stroke={color}>
      <ellipse cx={cx} cy={cy} rx={rx} ry={ry} fill="#fff" />
      <path d={`M${cx} ${cy}V${cy - ry}A${rx} ${ry} 0 0 1 ${cx + rx} ${cy}z`} fill={color} />
      <path d={`M${cx} ${cy}V${cy + ry}A${rx} ${ry} 0 0 1 ${cx - rx} ${cy}z`} fill={color} />
    </g>
  );
}

function LevelMarks() {
  return (
    <g fontFamily="'Liberation Sans', Arial, sans-serif">
      {levels.map((level, i) => {
        const reach = i === 0 ? 966 : i === 1 ? 1042 : 806;
        const start = i === 0 ? 1064 : i === 1 ? 1042 : 1215;
        const ly = level.left - 7;
        const ry = level.right - 2;
        return (
          <g key={level.height}>
            <path
              d={`M423 ${ly}L${reach} ${ly - (reach - 423) * 0.107}`}
              stroke="#000"
              strokeWidth="1.200"
              strokeDasharray="27 14 53 14"
            />
            <path d={`M372 ${ly + 5}l37 -3`} stroke="#000" strokeWidth="1.200" />
            <path
              d={`M1525 ${ry}L${start} ${ry - (1525 - start) * 0.447}`}
              stroke="#000"
              strokeWidth="1.200"
              strokeDasharray="38 9 14 9 29 9"
            />
            <LevelHead cx={361} cy={level.left} rx={10} ry={12} color="#0033b8" />
            <LevelHead cx={1530} cy={level.right} rx={5} ry={11} color="#06105c" />
            <g fontSize="12" fill="#111">
              <text transform={`translate(381 ${level.left - 8}) rotate(-4)`}>{level.name}</text>
              <text transform={`translate(381 ${level.left + 11}) rotate(-4)`}>{level.height}</text>
            </g>
            <g fontSize="9" fill="#111" fontFamily="'Liberation Sans Narrow', 'Liberation Sans', sans-serif">
              <text transform={`translate(1499 ${level.right - 21}) rotate(18)`}>{level.name}</text>
              <text transform={`translate(1496 ${level.right + 2}) rotate(18)`}>{level.height}</text>
            </g>
          </g>
        );
      })}
    </g>
  );
}

function ViewCube() {
  return (
    <g stroke="#a0a0a0" strokeWidth="1" fontFamily="'Liberation Sans', sans-serif">
      <ellipse cx="1557" cy="317" rx="67" ry="19" fill="#f4f4f4" strokeDasharray="4 2" />
      <ellipse cx="1558" cy="315" rx="51" ry="14" fill="#fff" strokeDasharray="4 2" />
      <ellipse cx="1560" cy="314" rx="38" ry="9" fill="#d5d5d5" stroke="none" />
      <path d="M1490 321l18-3M1494 324l16-4M1577 332l18-6M1580 336l16-5M1600 306l16-3M1604 309l8-6" />
      <path d="M1527 260l19 7v50l-19-12z" fill="#e4e4e4" />
      <path d="M1546 267l46-4v48l-46 6z" fill="#f1f1f1" />
      <path d="M1527 260l42-3 23 6-46 4z" fill="#f6f6f6" />
      <path d="M1551 260l9 2M1558 259l9 3" />
      <g stroke="none" fill="#8c8c8c" fontWeight="bold">
        <text fontSize="10" transform="translate(1558 295) rotate(-4)">LEFT</text>
        <text fontSize="6" transform="translate(1528 284) rotate(18)">BACK</text>
      </g>
    </g>
  );
}

function NavigationBar() {
  return (
    <div className="absolute top-[173px] right-[2px] flex h-[117px] w-[35px] flex-col items-center rounded-md border-2 border-[#bdbdbd] bg-[#f6f6f6] text-[#8c8c8c]">
      <button
        aria-label="Close navigation bar"
        className="mt-px mr-px flex h-2 w-2 items-center justify-center self-end rounded-full bg-[#aaa] text-white"
      >
        <X size={6} strokeWidth={4} />
      </button>
      <button aria-label="Steering wheel" className="mt-2">
        <Art size={24}>
          <g stroke="#999">
            <path d="M12 1h10v11a10.500 10.500 0 1 1-10-11z" fill="#eee" />
            <circle cx="12" cy="12" r="6" fill="#fff" />
          </g>
        </Art>
      </button>
      <Caret className="mt-2 w-[5px] opacity-60" />
      <div className="mt-1 h-px w-[26px] bg-[#c4c4c4]" />
      <button aria-label="Zoom region" className="mt-2">
        <Art size={18}>
          <path d="M1 1h11v11H1z" fill="#b9d79f" stroke="#7fa36a" />
          <circle cx="11" cy="11" r="3.500" fill="#fff" stroke="#999" />
          <path d="M14 14l3 3" stroke="#999" strokeWidth="2" />
        </Art>
      </button>
      <Caret className="mt-2 w-[5px] opacity-60" />
      <button
        aria-label="Navigation options"
        className="mt-auto mr-px mb-[2px] flex h-2 w-2 items-center justify-center self-end rounded-full bg-[#aaa]"
      >
        <span className="h-px w-1 bg-white" />
      </button>
    </div>
  );
}

function ModelCanvas() {
  return (
    <div className="relative min-h-0 flex-1 bg-white">
      <svg viewBox="311 193 1336 796" preserveAspectRatio="xMinYMin meet" className="absolute inset-0 h-full w-full">
        <defs>
          <pattern id="concrete" width="74" height="96" patternUnits="userSpaceOnUse">
            <path d="M0 0h74v96H0z" fill="#73746a" />
            <path
              d="M6 8h3v4h-3zM26 20h3v3h-3zM50 5h3v3h-3zM62 30h3v6h-3zM14 38h3v3h-3zM38 46h4v3h-4zM20 62h3v6h-3zM56 66h3v3h-3zM5 80h3v3h-3zM44 84h3v4h-3zM68 88h3v3h-3zM32 76h3v3h-3z"
              fill="#24261f"
            />
          </pattern>
          <pattern id="grain" width="22" height="20" patternUnits="userSpaceOnUse">
            <path d="M2 3h3v2h-3zM12 8h3v2h-3zM6 14h3v2h-3zM18 17h3v2h-3z" fill="#33352e" />
          </pattern>
          <linearGradient id="nose">
            <stop offset="0" stopColor="#1b1c1a" />
            <stop offset="1" stopColor="#5a5b58" />
          </linearGradient>
        </defs>
        <LevelMarks />
        <Building />
        <ViewCube />
      </svg>
      <NavigationBar />
    </div>
  );
}

// ================= VIEW CONTROL BAR =================

const cross = <path d="M9 9l6 6M15 9l-6 6" stroke="#c4501b" strokeWidth="2" />;
const bulb = <circle cx="12" cy="9" r="3" fill="#d9ecff" stroke={BLUE} />;

const viewControls = [
  {
    label: "Detail Level",
    art: (
      <>
        <path d="M0 2h16v12H0z" fill="#8d8d8d" />
        <path d="M5 6h6v5H5zM1 3h3v3H1zM12 3h3v3h-3zM1 10h3v3H1zM12 10h3v3h-3z" fill="#fff" stroke="none" />
      </>
    ),
  },
  {
    label: "Visual Style",
    art: <path d="M1 7l4-4h10v6l-4 5H1zM1 7h10v7M11 7l4-4" fill="#bfe0f7" stroke="#1467b3" />,
  },
  {
    label: "Sun Path",
    art: (
      <>
        <circle cx="7" cy="7" r="4" fill="#fff0b8" stroke="#d98a12" />
        <path d="M7 0v2M0 7h2M2 2l1 1M12 2l-1 1M2 12l1-1" stroke="#c77d12" />
        {cross}
      </>
    ),
  },
  {
    label: "Shadows",
    art: (
      <>
        <circle cx="7" cy="6" r="4" fill="#cfe6fa" stroke="#1467b3" />
        <path d="M2 13h7" strokeWidth="2" />
        {cross}
      </>
    ),
  },
  {
    label: "Rendering Dialog",
    art: (
      <>
        <path d="M1 4c3 1 3 6 4 8h6V5H5M7 5V3h3v2" />
        {bulb}
      </>
    ),
  },
  {
    label: "Crop View",
    art: (
      <>
        <path d="M0 12h4V4h11M5 1v12h8V5" stroke="#1467b3" />
        {cross}
      </>
    ),
  },
  {
    label: "Show Crop Region",
    art: (
      <>
        <path d="M0 12h4V4h11M5 1v12h8V5" stroke="#1467b3" />
        {bulb}
      </>
    ),
  },
  {
    label: "Lock View",
    art: (
      <>
        <path d="M1 7l6-5 7 3v7l-6 3-6-3zM1 7l5 2 5-5M6 9v5" fill="#eee" />
        <path d="M9 10h6v5H9z" fill="#d5e8f8" />
      </>
    ),
  },
  {
    label: "Temporary Hide",
    art: <path d="M1 4l4 4c-2 3 1 5 3 2 0 3 5 3 5 0s-2-3-4-1M13 9l2-5-3-1" />,
  },
  {
    label: "Reveal Hidden",
    art: (
      <>
        <circle cx="8" cy="6" r="3" fill="#d9ecff" stroke={BLUE} />
        <path d="M7 10h2v3H7z" fill="#666" strokeWidth="1" />
      </>
    ),
  },
  {
    label: "View Properties",
    art: (
      <>
        <path d="M1 3h12v10H1z" strokeDasharray="3 1" />
        <circle cx="11" cy="10" r="3" fill="#fff" />
      </>
    ),
  },
  {
    label: "Analytical Model",
    art: (
      <>
        <path d="M2 5l4-3h9M2 5v9M6 5v9M10 5v9M2 5h9" />
        <path d="M2 9h9" stroke="#b0392b" />
        {bulb}
      </>
    ),
  },
  {
    label: "Displacement",
    art: <path d="M2 6l4-4h8v8l-4 4H2zM2 6h8v8M10 6l4-4M6 6v8" fill="#e8e8e8" />,
  },
  {
    label: "Reveal Constraints",
    art: (
      <>
        <path d="M1 1v14M1 4h13M15 1v6M1 13h7" />
        <path d="M9 9h6v5H9z" fill="#555" />
      </>
    ),
  },
];

function ViewControlBar() {
  return (
    <div className="flex h-[17px] shrink-0 items-center bg-[#efefef] text-[12px] text-black">
      <button className="ml-[25px] w-[53px] text-left leading-4">1 : 100</button>
      {viewControls.map((control) => (
        <button key={control.label} aria-label={control.label} className="flex w-[21px] justify-center">
          <Art size={16}>{control.art}</Art>
        </button>
      ))}
      <div className="flex flex-1 justify-center">
        <div className="h-[2px] w-[18px] bg-[#8a8a8a]" />
      </div>
      <Art size={10} className="mr-1 self-end">
        <path d="M7 1h2v2H7zM4 4h2v2H4zM7 4h2v2H7zM1 7h2v2H1zM4 7h2v2H4zM7 7h2v2H7z" fill="#aaa" stroke="none" />
      </Art>
    </div>
  );
}

// ================= PROJECT BROWSER =================

const browserRows = [
  { text: "Views (all)", guides: ["open"], icon: "views", first: true },
  { text: "Structural Plans", guides: ["line", "open"] },
  { text: "Level0", guides: ["line", "line", "tee"], selected: true },
  { text: "Level 1", guides: ["line", "line", "tee"] },
  { text: "Level 2", guides: ["line", "line", "tee"] },
  { text: "Level 3", guides: ["line", "line", "tee"] },
  { text: "Level 4", guides: ["line", "line", "tee"] },
  { text: "Level 5", guides: ["line", "line", "tee"] },
  { text: "Level 6", guides: ["line", "line", "elbow"] },
  { text: "Floor Plans", guides: ["line", "closed"] },
  { text: "Ceiling Plans", guides: ["line", "closed"] },
  { text: "3D Views", guides: ["line", "closed"] },
  { text: "Elevations (Building Elevation)", guides: ["line", "openLast"] },
  { text: "East", guides: ["line", "none", "tee"] },
  { text: "North", guides: ["line", "none", "tee"] },
  { text: "South", guides: ["line", "none", "tee"] },
  { text: "West", guides: ["line", "none", "elbow"] },
  { text: "Legends", guides: ["tee"], icon: "legends" },
  { text: "Schedules/Quantities (all)", guides: ["open"], icon: "schedules" },
  { text: "Rebar Schedule", guides: ["line", "elbow"] },
  { text: "Sheets (all)", guides: ["tee"], icon: "sheets" },
  { text: "Families", guides: ["closed"], icon: "families" },
  { text: "Groups", guides: ["closed"], icon: "groups" },
  { text: "Revit Links", guides: ["elbow"], icon: "links" },
];

const browserArt = {
  views: (
    <>
      <path d="M4 2H1v3M1 11v3h3M12 2h3v3M15 11v3h-3" />
      <path d="M4 7l2-2h5v5l-2 2H4z" fill="#eee" />
    </>
  ),
  legends: (
    <>
      <path d="M1 1h14v14H1zM1 4h14" fill="#eee" />
      <path d="M3 6h3v3H3zM3 11h3v2H3z" fill="#666" strokeWidth="1" />
      <path d="M8 7h5M8 9h5M8 12h5" strokeWidth="1" />
    </>
  ),
  schedules: <path d="M1 3h14v11H1zM1 7h14M1 10h14M5 4v10M10 4v10M1 4h14" fill="#eee" strokeWidth="1" />,
  sheets: <path d="M1 3h11l3 3v8H1zM3 6h6v5H3zM10 9h3v3h-3z" fill="#eee" strokeWidth="1" />,
  families: <path d="M1 2h6v6H1zM9 2h6v12H1v-4h8z" fill="#eee" />,
  groups: (
    <>
      <path d="M4 1H1v14h3M12 1h3v14h-3" />
      <circle cx="7" cy="7" r="3.500" fill="#ddd" />
      <path d="M7 7h5v5H7z" fill="#aaa" />
    </>
  ),
  links: (
    <g stroke="#c5761a" strokeWidth="2">
      <rect x="1" y="5" width="7" height="6" rx="3" fill="#fbe3b8" />
      <rect x="8" y="5" width="7" height="6" rx="3" fill="#fbe3b8" />
      <path d="M5 8h6" />
    </g>
  ),
};

function TreeGuide({ kind, first }) {
  const boxed = kind === "open" || kind === "openLast" || kind === "closed";
  const stops = kind === "elbow" || kind === "openLast";
  return (
    <svg width="20" height="18" className="shrink-0 overflow-visible" fill="none">
      {kind !== "none" && (
        <path d={`M8.500 ${first ? 9 : 0}V${stops ? 10 : 18}`} stroke="#9a9a9a" strokeDasharray="1 1" />
      )}
      {kind !== "none" && kind !== "line" && (
        <path d="M9 10.500H23" stroke="#9a9a9a" strokeDasharray="1 1" />
      )}
      {boxed && (
        <>
          <rect x="4.500" y="6.500" width="8" height="8" fill="#fff" stroke="#8e8e8e" />
          <path d={kind === "closed" ? "M6 10.500h5M8.500 8v5" : "M6 10.500h5"} stroke="#2a5fa8" />
        </>
      )}
    </svg>
  );
}

function ProjectBrowser() {
  return (
    <aside className="flex w-[253px] shrink-0 flex-col border-l-2 border-[#cbcbcb] bg-white text-[12px] text-black">
      <div className="flex h-5 items-center justify-between bg-[#eeeeee] pt-px pr-[2px] pl-1 whitespace-pre text-[#333]">
        {"Project Browser - Project   19 5 2025"}
        <button aria-label="Close Project Browser">
          <X size={13} color="#222" strokeWidth={3} />
        </button>
      </div>
      <ul className="pl-[2px]">
        {browserRows.map((row, i) => (
          <li key={`${row.text}-${i}`} className="flex h-[18px] items-center">
            {row.guides.map((kind, depth) => (
              <TreeGuide key={depth} kind={kind} first={row.first} />
            ))}
            {row.icon && (
              <span className="relative bg-white pl-px">
                <Art size={16}>{browserArt[row.icon]}</Art>
              </span>
            )}
            <button
              className={`h-[18px] px-[3px] text-left whitespace-nowrap ${row.icon ? "ml-[2px]" : "ml-[3px]"} ${
                row.selected ? "bg-[#e0e0e0]" : ""
              }`}
            >
              {row.text}
            </button>
          </li>
        ))}
      </ul>
    </aside>
  );
}

// ================= STATUS BAR =================

const pointer = <path d="M8 4v10l3-2 2 4 1-1-1-4h3z" fill="#fff" strokeWidth="1" />;

const selectionTools = [
  {
    label: "Select Links",
    art: (
      <>
        <circle cx="4" cy="5" r="3" stroke="#e07b1a" strokeWidth="2" />
        <circle cx="11" cy="5" r="3" stroke="#e07b1a" strokeWidth="2" />
        {pointer}
      </>
    ),
  },
  {
    label: "Select Underlay",
    art: (
      <>
        <path d="M1 12L8 3v9z" stroke="#1467b3" />
        <path d="M8 1l6 5M14 1L8 6" stroke="#c4301b" strokeWidth="2" />
        {pointer}
      </>
    ),
  },
  {
    label: "Select Pinned",
    art: (
      <>
        <path d="M3 1h8v3H9v4h3v2H2V8h3V4H3zM7 10v5" fill="#f7b25a" stroke="#b05a10" />
        {pointer}
      </>
    ),
  },
  {
    label: "Select by Face",
    art: (
      <>
        <path d="M1 4l6-3v11l-6 3z" fill="#9fd0ff" stroke="#1467b3" />
        <path d="M8 1l6 5M14 1L8 6" stroke="#c4301b" strokeWidth="2" />
        {pointer}
      </>
    ),
  },
  {
    label: "Drag on Selection",
    art: (
      <>
        <path d="M5 0v10M0 5h10M3 2l2-2 2 2M2 3L0 5l2 2" />
        {pointer}
      </>
    ),
  },
  {
    label: "Background Processes",
    art: <circle cx="8" cy="8" r="5" stroke="#a5a5a5" strokeWidth="4" strokeDasharray="3 1" />,
  },
];

function StatusBar() {
  return (
    <footer className="flex h-[25px] shrink-0 items-center border-b border-[#b9bd9a] bg-[#cbcbcb] pt-px text-[12px] text-black">
      <p className="w-[893px] pl-px text-[11px]">
        Click to select, TAB for alternates, CTRL adds, SHIFT unselects.
      </p>
      <Art size={20}>
        <path d="M6 4l4-3 5 3v6l-5 2-4-2z" fill="#7fc28a" />
        <path d="M2 9l4-2 4 2v7l-4 2-4-2z" fill="#9fd0ff" stroke="#1467b3" />
        <path d="M15 9v9M13 7v3h4V7" stroke="#26437c" strokeWidth="2" />
      </Art>
      <Picker label="Active workset" options={[""]} className="ml-[7px] h-[18px] w-[204px]" />
      <button className="ml-2 flex w-[54px] items-center gap-[3px]">
        <Art size={16}>
          <path d="M5 1h9v4H8v4l-3 5H2l3-6z" fill="#aaa" stroke="#888" />
        </Art>
        :0
      </button>
      <button aria-label="Design Options" className="w-7">
        <Art size={16}>
          <path d="M1 1h14v14H1z" fill="#fff" />
          <path d="M1 2h14" strokeWidth="3" />
          <path d="M3 6h2M6 9h2M9 6h4M9 9h4M6 12h7" />
        </Art>
      </button>
      <button aria-label="Add to set" className="w-[22px]">
        <Art size={16}>
          <path d="M1 1h13v14H1z" fill="#8d8d8d" stroke="none" />
          <path d="M2 7h6l-2-2M8 7l-2 3" stroke="#ddd" />
        </Art>
      </button>
      <Picker
        label="Active design option"
        options={["Main Model"]}
        className="h-[18px] w-[204px]"
        selectClass="pl-[2px] text-[#777]"
      />

      <div className="mr-[73px] ml-auto flex items-center">
        {selectionTools.map((tool) => (
          <button key={tool.label} aria-label={tool.label} className="flex w-[26px] justify-center">
            <Art size={16}>{tool.art}</Art>
          </button>
        ))}
        <button className="flex items-center">
          <Art size={18}>
            <path d="M1 2h15l-6 7v7H7V9z" fill="#e6e6e6" />
          </Art>
          :0
        </button>
      </div>
    </footer>
  );
}

// ================= TASKBAR =================

const taskIcons = [
  { label: "Skype", art: <FaSkype size={24} color="#0b9be5" /> },
  { label: "Messenger", art: <FaFacebookMessenger size={24} color="#0a73ff" /> },
  { label: "Facebook", art: <FaFacebook size={24} color="#0d7ff0" /> },
  {
    label: "Instagram",
    art: (
      <span className="flex h-6 w-6 items-center justify-center rounded-md bg-linear-to-tr from-[#fdb13c] via-[#e1306c] to-[#7b3fc4]">
        <FaInstagram size={18} color="#fff" />
      </span>
    ),
  },
  {
    label: "Share",
    art: (
      <Art size={24}>
        <rect width="24" height="24" rx="5" fill="#2b95f5" stroke="none" />
        <circle cx="12" cy="12" r="6" stroke="#fff" strokeDasharray="9 3" />
        <g fill="#fff" stroke="none">
          <circle cx="12" cy="6" r="2.500" />
          <circle cx="7" cy="15" r="2.500" />
          <circle cx="17" cy="15" r="2.500" />
        </g>
      </Art>
    ),
  },
  { label: "WhatsApp", art: <FaWhatsapp size={25} color="#1f8a56" /> },
  {
    label: "Microsoft Store",
    art: (
      <Art size={24}>
        <path d="M7 6V2h10v4" stroke="#45b0f0" strokeWidth="2" />
        <path d="M1 5h22v15a3 3 0 0 1-3 3H4a3 3 0 0 1-3-3z" fill="#1b3a7a" stroke="none" />
        <path d="M8 10h4v4H8z" fill="#f25022" stroke="none" />
        <path d="M13 10h4v4h-4z" fill="#7fba00" stroke="none" />
        <path d="M8 15h4v4H8z" fill="#00a4ef" stroke="none" />
        <path d="M13 15h4v4h-4z" fill="#ffb900" stroke="none" />
      </Art>
    ),
  },
  {
    label: "Edge",
    art: (
      <span className="relative">
        <FaEdge size={24} color="#1782cf" />
        <span className="absolute -bottom-px left-0 h-[11px] w-[11px] rounded-full border border-[#ddd] bg-[#8b8f94]" />
      </span>
    ),
  },
  {
    label: "File Explorer",
    art: (
      <Art size={24}>
        <path d="M0 2h9l2 3h13v17H0z" fill="#fdb94d" stroke="none" />
        <path d="M0 2h9l2 3H0z" fill="#e08a2a" stroke="none" />
        <path d="M4 22v-5a2 2 0 0 1 2-2h11a2 2 0 0 1 2 2v5z" fill="#1273c4" stroke="none" />
      </Art>
    ),
  },
  {
    label: "Copilot",
    art: (
      <Art size={24}>
        <path d="M7 2h8q3 0 4 5h-6q-2 0-3 4l-2 7H3Q-1 18 1 12L4 5Q5 2 7 2z" fill="#1c86e0" stroke="none" />
        <path d="M1 11h9l-2 7H3Q0 17 1 11z" fill="#6cc04a" stroke="none" />
        <path d="M17 22H9q-3 0-4-4h6q2 0 3-4l2-7h5q4 0 2 6l-3 6q-1 3-3 3z" fill="#d63f8c" stroke="none" />
        <path d="M5 18h6q2 0 3-3l6 3q-1 4-4 4H9q-3 0-4-4z" fill="#f48a2b" stroke="none" />
      </Art>
    ),
  },
  {
    label: "Task View",
    art: (
      <Art size={24}>
        <path d="M6 6h18v16H6z" fill="#222" stroke="none" />
        <path d="M0 1h17v15H0z" fill="#e9e9e9" fillOpacity=".85" stroke="none" />
      </Art>
    ),
  },
];

function Taskbar() {
  return (
    <footer className="flex h-[47px] shrink-0 items-center bg-linear-to-r from-[#dfe9b8] via-[#f0ee98] to-[#e3ecb0] text-[#222]">
      <div className="flex flex-1 items-center">
        <div dir="rtl" className="w-[74px] pr-px text-[11px] leading-4 font-['DejaVu_Sans',sans-serif]">
          <div className="pr-3">١٠:٤٧ ص</div>
          <div className="whitespace-nowrap">٢٠٢٥/٠٦/٠٦</div>
        </div>
        <button aria-label="Battery" className="ml-4">
          <Art size={16}>
            <path d="M2 5h11v7H2zM15 7v3" fill="#222" stroke="#222" />
            <path d="M4 1L1 6h3l-1 4" stroke="#222" />
          </Art>
        </button>
        <button aria-label="Volume" className="ml-[7px]">
          <Volume2 size={16} />
        </button>
        <button aria-label="Network" className="ml-2">
          <Wifi size={17} />
        </button>
        <button className="ml-[18px] text-[11px]">ENG</button>
        <button aria-label="OneDrive" className="ml-[18px]">
          <CloudOff size={18} />
        </button>
        <button aria-label="Hidden icons" className="ml-[15px]">
          <ChevronUp size={16} />
        </button>
      </div>

      <div className="flex items-center">
        <button aria-label="Revit" className="flex w-11 justify-center">
          <span className="flex h-[38px] w-[38px] flex-col items-center justify-between rounded-[4px] bg-[#f9f8d3] pt-1">
            <span className="flex h-[26px] w-6 items-center justify-center bg-[#dcebf3] text-xl font-bold text-[#1b5e9e]">
              R
            </span>
            <span className="h-[3px] w-4 rounded-full bg-[#1267b4]" />
          </span>
        </button>
        {taskIcons.map((icon) => (
          <button key={icon.label} aria-label={icon.label} className="flex w-11 justify-center">
            {icon.art}
          </button>
        ))}
        <button
          dir="rtl"
          className="mx-[3px] flex h-[31px] w-[218px] items-center rounded-full border border-[#dcdcae] bg-[#fafbe3] px-[10px] text-[12px]"
        >
          <Search size={17} className="-scale-x-100" />
          <span className="mr-2 flex-1 text-right text-[#666]">بحث</span>
          <Art size={40} className="h-7">
            <path d="M16 8q1 10 9 12q-8 2-9 12q-1-10-9-12q8-2 9-12z" fill="#f8b03a" stroke="none" />
            <path d="M31 18q0 5 4 6q-4 1-4 6q0-5-4-6q4-1 4-6z" fill="#f8c14a" stroke="none" />
            <circle cx="26" cy="9" r="2" fill="#e08a2a" stroke="none" />
            <path d="M4 24l3 4-3 4-3-4z" fill={BLUE} stroke="none" />
            <circle cx="38" cy="32" r="2" fill="#7fa83a" stroke="none" />
          </Art>
        </button>
        <button aria-label="Start" className="flex w-11 justify-center">
          <Art size={24}>
            <path d="M1 1h10v10H1zM12 1h11v10H12zM1 12h10v11H1zM12 12h11v11H12z" fill="#1187e0" stroke="none" />
          </Art>
        </button>
      </div>

      <div className="flex flex-1 items-center justify-end">
        <div className="text-right text-[11px] leading-4">
          <div>31°C</div>
          <div dir="rtl" className="text-[#666]">مشمس</div>
        </div>
        <span className="mr-[21px] ml-[10px] h-5 w-5 rounded-full bg-[#e9822b]" />
      </div>
    </footer>
  );
}

// ================= WATERMARK =================

function Watermark() {
  return (
    <div className="pointer-events-none absolute bottom-[24px] left-[830px] flex w-[260px] flex-col items-center font-bold whitespace-nowrap text-[#707070]/20">
      <span dir="rtl" className="font-['DejaVu_Sans',sans-serif] text-[72px] leading-[84px]">
        مستقل
      </span>
      <span className="font-['Liberation_Sans',sans-serif] text-[38px] leading-[42px]">mostaql.com</span>
    </div>
  );
}

export default function App() {
  return (
    <div className="relative flex h-screen flex-col overflow-hidden bg-[#eeeeee] font-['Open_Sans','Noto_Sans','DejaVu_Sans',sans-serif]">
      <TitleBar />
      <RibbonTabs />
      <Ribbon />
      <div className="h-[28px] shrink-0 border-b-2 border-[#cbcbcb]" />

      <main className="flex min-h-0 flex-1">
        <PropertiesPalette />

        <section className="flex min-w-0 flex-1 flex-col">
          <ViewTabs />
          <div className="flex min-h-0 flex-1">
            <ModelCanvas />
            <div className="mt-[2px] mr-[2px] flex w-4 items-center justify-center bg-[#efefef]">
              <div className="h-4 w-[2px] bg-[#8a8a8a]" />
            </div>
          </div>
          <ViewControlBar />
          <div className="h-[2px] shrink-0 bg-white" />
        </section>

        <ProjectBrowser />
      </main>

      <StatusBar />
      <Taskbar />
      <Watermark />
    </div>
  );
}
